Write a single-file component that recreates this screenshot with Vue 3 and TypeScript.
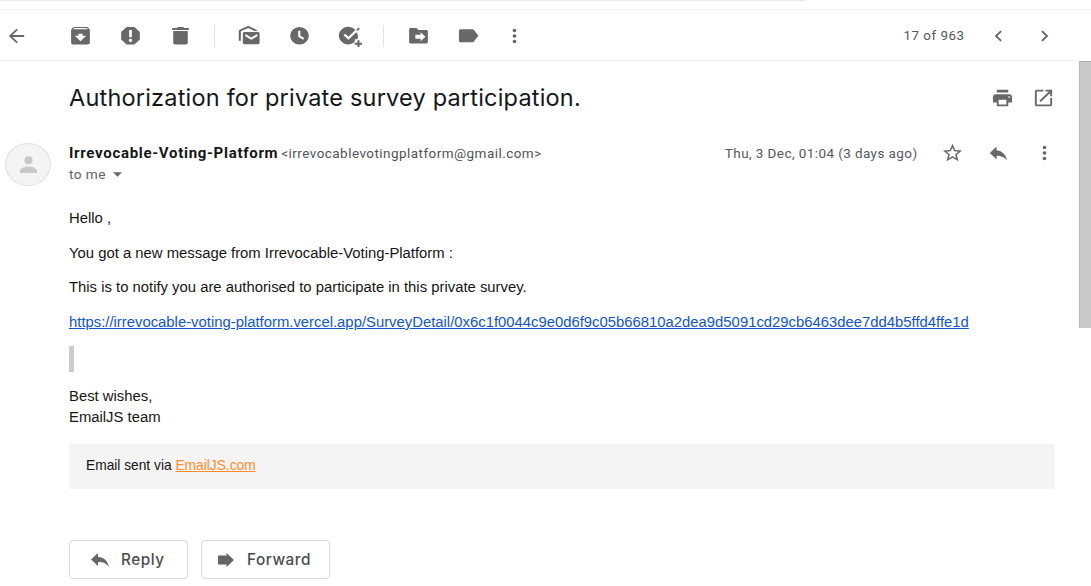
<script setup lang="ts">
interface Tool {
  name: string
  paths: string[]
}

const archive: Tool = {
  name: 'archive',
  paths: ['M20.540 5.230l-1.390-1.680C18.880 3.210 18.470 3 18 3H6c-.47 0-.88.21-1.160.55L3.460 5.230C3.170 5.570 3 6.020 3 6.500V19c0 1.100.9 2 2 2h14c1.100 0 2-.9 2-2V6.500c0-.48-.17-.93-.46-1.270zM12 17.500L6.500 12H10v-2h4v2h3.500L12 17.500zM4.900 5.400l1-1.200h12.200l1 1.200z'],
}
const spam: Tool = {
  name: 'spam',
  paths: ['M15.730 3H8.270L3 8.270v7.460L8.270 21h7.460L21 15.730V8.270L15.730 3zM12 18.400a1.700 1.700 0 1 1 0-3.400 1.700 1.700 0 0 1 0 3.400zM13.300 13.500h-2.600V6h2.600z'],
}
const trash: Tool = {
  name: 'trash',
  paths: ['M5 7.200V19c0 1.100.9 2 2 2h10c1.100 0 2-.9 2-2V7.200zM15.500 4l-1-1h-5l-1 1H4v2h16V4z'],
}
const unread: Tool = {
  name: 'unread',
  paths: [
    'M20.200 8.200H7.100C6.300 8.200 5.600 8.900 5.600 9.700v9.500c0 .8.700 1.500 1.500 1.500h13.100c.8 0 1.500-.7 1.500-1.500V9.700c0-.8-.7-1.500-1.500-1.500zM19.500 12.400l-5.800 3.700-5.700-3.700v-2.300l5.700 3.700 5.800-3.700z',
    'M1.700 17V7.400c0-.7.3-1.200.9-1.500L10.800 1.900l7.800 4c.4.300.7.6.9 1.200h-2.700L10.800 4.100 3.700 7.500V17z',
  ],
}
const snooze: Tool = {
  name: 'snooze',
  paths: ['M12 3a9 9 0 1 0 0 18 9 9 0 0 0 0-18zM15.500 16l-4.700-2.900V7h2v5.100l3.700 2.300z'],
}
const task: Tool = {
  name: 'task',
  paths: [
    'M18.500 8.500l-7.500 7.700-4.700-4.600L7.900 10l3.100 3 6.700-6.900A9 9 0 1 0 17 18.300v-2.700h2.700A9 9 0 0 0 20 12c0-1.300-.5-2.500-1.500-3.500z',
    'M18.500 5.700l2.200-2.200 1.300 1.300-2.300 2.300zM19.600 16.500h2v2.600h2.600v2h-2.600v2.600h-2v-2.600H17v-2h2.600z',
  ],
}
const move: Tool = {
  name: 'move',
  paths: ['M19.500 6H12l-2-2H4.500C3.600 4 3 4.700 3 5.500v13c0 .8.700 1.500 1.500 1.500h15c.8 0 1.500-.7 1.500-1.500v-11c0-.8-.7-1.500-1.500-1.500zM14 17.500V15H9v-4h5V8.500l4.700 4.500z'],
}
const label: Tool = {
  name: 'label',
  paths: ['M17.200 6.200C16.900 5.600 16.300 5.300 15.700 5.300H4.500C3.600 5.300 2.800 6 2.800 6.900v10.200c0 .9.700 1.600 1.700 1.600h11.200c.6 0 1.200-.3 1.500-.9L21.500 12z'],
}

const groups: Tool[][] = [
  [archive, spam, trash],
  [unread, snooze, task],
  [move, label],
]

const surveyUrl =
  'https://irrevocable-voting-platform.vercel.app/SurveyDetail/0x6c1f0044c9e0d6f9c05b66810a2dea9d5091cd29cb6463dee7dd4b5ffd4ffe1d'
</script>

<template>
  <div class="mail">
    <div class="search-edge"></div>
    <header class="toolbar">
      <button class="tool back" aria-label="Back">
        <svg class="icon small" viewBox="0 0 24 24" preserveAspectRatio="none"><path d="M20 11H7.830l5.590-5.590L12 4l-8 8 8 8 1.410-1.410L7.830 13H20z" /></svg>
      </button>
      <template v-for="(group, i) in groups" :key="i">
        <span v-if="i > 0" class="divider"></span>
        <button v-for="tool in group" :key="tool.name" class="tool" :class="tool.name" :aria-label="tool.name">
          <svg class="icon" viewBox="0 0 24 24" preserveAspectRatio="none" fill-rule="evenodd">
            <path v-for="(d, n) in tool.paths" :key="n" :d="d" />
          </svg>
        </button>
      </template>
      <button class="tool more" aria-label="More">
        <svg class="icon small" viewBox="0 0 24 24" preserveAspectRatio="none"><path d="M12 8a2 2 0 1 0 0-4 2 2 0 0 0 0 4zm0 2a2 2 0 1 0 0 4 2 2 0 0 0 0-4zm0 6a2 2 0 1 0 0 4 2 2 0 0 0 0-4z" /></svg>
      </button>
      <span class="count">17 of 963</span>
      <button class="tool prev" aria-label="Newer">
        <svg class="icon small" viewBox="0 0 24 24" preserveAspectRatio="none"><path d="M15.410 7.410L14 6l-6 6 6 6 1.410-1.410L10.830 12z" /></svg>
      </button>
      <button class="tool next" aria-label="Older">
        <svg class="icon small" viewBox="0 0 24 24" preserveAspectRatio="none"><path d="M10 6L8.590 7.410 13.170 12l-4.580 4.590L10 18l6-6z" /></svg>
      </button>
    </header>

    <div class="content">
      <main class="thread">
        <div class="subject-row">
          <h1 class="subject">Authorization for private survey participation.</h1>
          <svg class="icon print" viewBox="0 0 24 24" preserveAspectRatio="none" fill-rule="evenodd"><path d="M19 8H5c-1.660 0-3 1.340-3 3v6h4v4h12v-4h4v-6c0-1.660-1.340-3-3-3zm-3 11H8v-5h8v5zm3-7c-.55 0-1-.45-1-1s.45-1 1-1 1 .45 1 1-.45 1-1 1zM18 3H6v3h12V3z" /></svg>
          <svg class="icon small open" viewBox="0 0 24 24" preserveAspectRatio="none"><path d="M19 19H5V5h7V3H5c-1.110 0-2 .9-2 2v14c0 1.100.89 2 2 2h14c1.100 0 2-.9 2-2v-7h-2v7zM14 3v2h3.590l-9.830 9.830 1.410 1.410L19 6.410V10h2V3h-7z" /></svg>
        </div>

        <section class="message-head">
          <div class="avatar">
            <svg class="person" viewBox="0 0 18 18" preserveAspectRatio="none"><circle cx="9" cy="4.500" r="4.300" /><path d="M0 18v-2.300c0-3 6-4.500 9-4.500s9 1.500 9 4.500V18z" /></svg>
          </div>
          <div class="people">
            <div class="from"><span class="name">Irrevocable-Voting-Platform</span><span class="address">&lt;irrevocablevotingplatform@gmail.com&gt;</span></div>
            <div class="to"><span>to me</span><svg class="caret" viewBox="0 0 10 5"><path d="M0 0h10L5 5z" /></svg></div>
          </div>
          <div class="meta">
            <span class="date">Thu, 3 Dec, 01:04 (3 days ago)</span>
            <svg class="icon small star" viewBox="0 0 24 24" preserveAspectRatio="none"><path d="M22 9.240l-7.190-.62L12 2 9.190 8.630 2 9.240l5.460 4.730L5.820 21 12 17.270 18.180 21l-1.630-7.030L22 9.240zM12 15.400l-3.760 2.270 1-4.280-3.320-2.880 4.380-.38L12 6.100l1.710 4.040 4.380.38-3.320 2.880 1 4.280L12 15.400z" /></svg>
            <svg class="icon small reply" viewBox="0 0 24 24" preserveAspectRatio="none"><path d="M10 9V5l-7 7 7 7v-4.100c5 0 8.500 1.600 11 5.100-1-5-4-10-11-11z" /></svg>
            <svg class="icon small dots" viewBox="0 0 24 24" preserveAspectRatio="none"><path d="M12 8a2 2 0 1 0 0-4 2 2 0 0 0 0 4zm0 2a2 2 0 1 0 0 4 2 2 0 0 0 0-4zm0 6a2 2 0 1 0 0 4 2 2 0 0 0 0-4z" /></svg>
          </div>
        </section>

        <article class="body">
          <p>Hello ,</p>
          <p>You got a new message from Irrevocable-Voting-Platform :</p>
          <p>This is to notify you are authorised to participate in this private survey.</p>
          <p><a class="survey-link">{{ surveyUrl }}</a></p>
          <div class="quote"></div>
          <p class="signature">Best wishes,<br />EmailJS team</p>
          <div class="sent-via"><span>Email sent via</span> <a class="brand">EmailJS.com</a></div>
        </article>

        <div class="actions">
          <button class="action reply-btn">
            <svg class="action-icon" viewBox="0 0 18 14" preserveAspectRatio="none"><path d="M7 4V0L0 6.500 7 13V9c5 0 8.500 1.300 11 5-1-5-4-9.500-11-10z" /></svg>
            <span>Reply</span>
          </button>
          <button class="action forward-btn">
            <svg class="action-icon" viewBox="0 0 16 14" preserveAspectRatio="none"><path d="M0 2.500h8.500V0L16 7l-7.500 7v-2.500H0z" /></svg>
            <span>Forward</span>
          </button>
        </div>
      </main>
      <div class="scrollbar"><div class="thumb"></div></div>
    </div>
  </div>
</template>

<style>
body {
  margin: 0;
  background: #fff;
  overflow: hidden;
}
</style>

<style scoped>
.mail {
  width: 1091px;
  height: 586px;
  overflow: hidden;
  display: flex;
  flex-direction: column;
  background: #fff;
  color: #151618;
  font-family: Roboto, sans-serif;
}
.search-edge {
  flex: none;
  width: 806px;
  height: 1px;
  margin-bottom: 8px;
  background: #ebebeb;
}
.toolbar {
  flex: none;
  box-sizing: border-box;
  height: 52px;
  border-top: 1px solid #ededed;
  display: flex;
  align-items: center;
}
button {
  padding: 0;
  border: 0;
  background: none;
  font: inherit;
  color: inherit;
}
.tool {
  width: 50px;
  height: 40px;
  flex: none;
  display: flex;
  align-items: center;
  justify-content: center;
}
.back {
  width: 33px;
  margin-right: 22.500px;
}
.divider {
  width: 1px;
  height: 22px;
  margin: 0 9.500px 0 8.500px;
  background: #e0e3e6;
}
.more {
  width: 41px;
}
.icon {
  flex: none;
  width: 25px;
  height: 23.500px;
  fill: #686868;
}
.icon.small {
  width: 23px;
  height: 22px;
}
.count {
  margin-left: auto;
  font-size: 13.400px;
  letter-spacing: 0.500px;
  color: #55585d;
}
.prev {
  width: 46px;
  margin-left: 10.500px;
}
.next {
  width: 46px;
  margin-right: 24px;
}
.content {
  flex: 1;
  display: flex;
  min-height: 0;
}
.thread {
  width: 1074px;
  box-sizing: border-box;
  border-top: 1px solid #e8ebee;
  margin-top: -1px;
}
.scrollbar {
  width: 12px;
  margin-left: 5px;
}
.thumb {
  height: 267px;
  background: #c9c9c9;
  border-left: 1px solid #b8b8b8;
  border-top: 1px solid #b0b0b0;
  box-sizing: border-box;
}
.subject-row {
  display: flex;
  align-items: center;
  height: 74px;
  padding-left: 69px;
}
.subject {
  flex: 1;
  margin: 0;
  font: 400 23.500px/30px Inter, sans-serif;
  letter-spacing: 0.200px;
  white-space: nowrap;
}
.print {
  width: 23px;
  height: 22px;
  margin-right: 18px;
}
.open {
  margin-right: 19px;
}
.message-head {
  display: flex;
  height: 73px;
  padding-left: 5px;
}
.avatar {
  box-sizing: border-box;
  width: 46px;
  height: 43px;
  margin-top: 8px;
  border: 1px solid #e0e0e0;
  border-radius: 50%;
  background: #f4f4f4;
  display: flex;
  align-items: center;
  justify-content: center;
}
.person {
  width: 17px;
  height: 17px;
  fill: #c8c8c8;
}
.people {
  margin-left: 18px;
  padding-top: 8px;
  flex: 1;
  white-space: nowrap;
}
.from {
  height: 20px;
  line-height: 20px;
}
.name {
  font-size: 15px;
  font-weight: 700;
  letter-spacing: 0.700px;
}
.address {
  margin-left: 3px;
  font-size: 13.500px;
  letter-spacing: 0.450px;
  color: #505357;
}
.to {
  display: flex;
  align-items: center;
  height: 22px;
  font-size: 13.700px;
  letter-spacing: 0.400px;
  color: #5f6368;
}
.caret {
  width: 9px;
  height: 5px;
  margin-left: 7px;
  fill: #666;
}
.meta {
  display: flex;
  align-items: center;
  height: 36px;
}
.date {
  font-size: 13.500px;
  letter-spacing: 0.410px;
  color: #55585d;
  white-space: nowrap;
}
.star {
  margin-left: 23px;
}
.reply {
  margin-left: 23px;
}
.dots {
  margin-left: 23px;
  margin-right: 18.500px;
}
.body {
  margin: 0 19px 0 69px;
  font-family: "Liberation Sans", Arial, sans-serif;
  font-size: 14.850px;
  line-height: 20.600px;
  color: #151515;
}
.body p {
  margin: 0 0 14px;
  white-space: nowrap;
}
.survey-link {
  color: #15c;
  text-decoration: underline;
}
.quote {
  width: 5px;
  height: 26px;
  background: #ccc;
}
.body .signature {
  margin: 14px 0 16.500px;
}
.sent-via {
  box-sizing: border-box;
  height: 45px;
  padding: 12px 17px;
  background: #f4f4f4;
  font-size: 13.750px;
}
.brand {
  color: #ff8b2b;
  text-decoration: underline;
}
.actions {
  display: flex;
  gap: 13px;
  margin: 51px 0 0 69px;
}
.action {
  box-sizing: border-box;
  height: 39px;
  border: 1px solid #d6d9de;
  border-radius: 4px;
  display: flex;
  align-items: center;
  font: 500 15.300px/20px Inter, sans-serif;
  letter-spacing: 0.550px;
  color: #4a4d51;
}
.reply-btn {
  width: 119px;
  padding-left: 21px;
}
.forward-btn {
  width: 129px;
  padding-left: 16px;
}
.action-icon {
  width: 18px;
  height: 14px;
  margin-right: 12px;
  fill: #666;
}
.forward-btn .action-icon {
  width: 16px;
  margin-right: 13px;
}
</style>
